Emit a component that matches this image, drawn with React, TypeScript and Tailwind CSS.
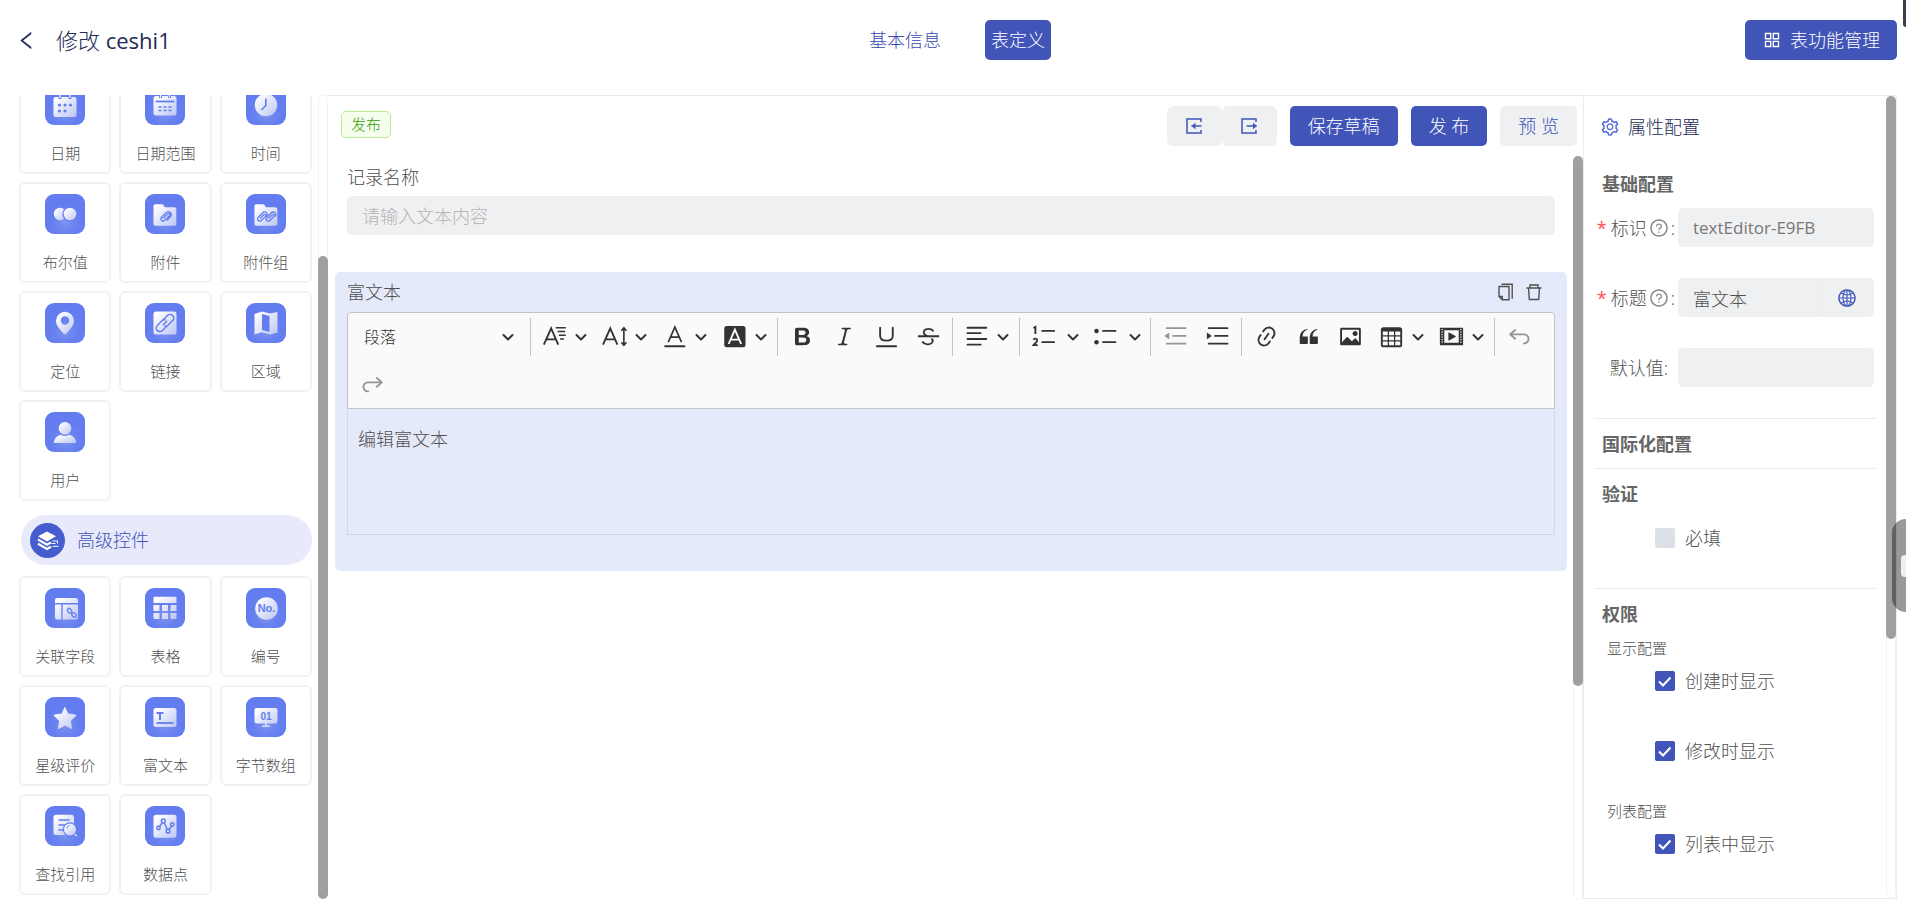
import type { ReactNode } from "react";
import clsx from "clsx";
import { AiOutlineAppstore, AiOutlineGlobal, AiOutlineLeft, AiOutlineQuestionCircle, AiOutlineSetting } from "react-icons/ai";

const BLUE = "#637df0";

// glyphs are drawn in a 40x40 box, filled with the shared "shade" gradient
const glyphs: Record<string, ReactNode> = {
    date: (
        <>
            <rect x="8.5" y="12" width="23" height="20" rx="2" />
            <path d="M15 10v4M25 10v4" stroke={BLUE} strokeWidth="3" />
            <path d="M15 10v3M25 10v3" stroke="#fff" strokeWidth="1.2" />
            <g fill={BLUE}>
                <circle cx="14.5" cy="20" r="1.6" />
                <circle cx="20" cy="20" r="1.6" />
                <circle cx="25.5" cy="20" r="1.6" />
                <circle cx="14.5" cy="26" r="1.6" />
                <circle cx="20" cy="26" r="1.6" />
            </g>
        </>
    ),
    range: (
        <>
            <rect x="8.5" y="11" width="23" height="19.5" rx="2.5" />
            <path d="M15.5 9v4M24.5 9v4" stroke={BLUE} strokeWidth="3" />
            <path d="M15.5 9.5v3M24.5 9.5v3" stroke="#fff" strokeWidth="1.2" />
            <path d="M10.5 16.5h19" stroke={BLUE} strokeWidth="1.8" />
            <path d="M13.5 22h3M18.5 22h3M23.5 22h3M13.5 25.5h3M18.5 25.5h3M23.5 25.5h3" stroke={BLUE} strokeWidth="1.3" />
        </>
    ),
    time: (
        <>
            <circle cx="20" cy="20" r="11.2" />
            <path d="M19.8 13.5v7l-4.3 4.5" fill="none" stroke={BLUE} strokeWidth="1.6" />
        </>
    ),
    bool: (
        <>
            <circle cx="15" cy="20" r="6.2" />
            <circle cx="25" cy="20" r="7.6" fill={BLUE} />
            <circle cx="25" cy="20" r="6.3" />
        </>
    ),
    file: (
        <>
            <path d="M8.5 12a1.8 1.8 0 0 1 1.8-1.8h6.5a2 2 0 0 1 1.6.8l1.6 2.2h9.5a1.8 1.8 0 0 1 1.8 1.8v15a1.8 1.8 0 0 1-1.8 1.8H10.3A1.8 1.8 0 0 1 8.5 30z" />
            <path d="m18 24.500 4.500-4.500a1.300 1.300 0 0 1 2 1.700l-5 4.800a2.200 2.200 0 0 1-3.200-3l5-5a3 3 0 0 1 4.700 3.500l-4 4.500" fill="none" stroke={BLUE} strokeWidth="1.3" />
        </>
    ),
    files: (
        <>
            <path d="M8.5 12a1.8 1.8 0 0 1 1.8-1.8h6.5a2 2 0 0 1 1.6.8l1.6 2.2h9.5a1.8 1.8 0 0 1 1.8 1.8v15a1.8 1.8 0 0 1-1.8 1.8H10.3A1.8 1.8 0 0 1 8.5 30z" />
            <g fill="none" stroke={BLUE} strokeWidth="1.3">
                <path d="m14 24.500 4-4a1.300 1.300 0 0 1 1.800 1.700l-4.500 4.300a2.200 2.200 0 0 1-3.200-3l4.500-4.500a2.600 2.600 0 0 1 4 3.500" />
                <path d="m22.500 24.500 4-4a1.300 1.300 0 0 1 1.800 1.700l-4.500 4.300a2.200 2.200 0 0 1-3.200-3l4.500-4.500a2.600 2.600 0 0 1 4 3.500" />
            </g>
        </>
    ),
    pin: <path fillRule="evenodd" d="M20 8.8a9 9 0 0 1 9 9c0 5-4 8.500-7.200 12.500a2.300 2.300 0 0 1-3.600 0C15 26.300 11 22.800 11 17.800a9 9 0 0 1 9-9zm0 4.500a4.200 4.200 0 1 0 0 8.400 4.200 4.200 0 0 0 0-8.400z" />,
    link: (
        <>
            <rect x="8.5" y="8.5" width="23" height="23" rx="2.5" />
            <g fill="none" stroke={BLUE} strokeWidth="1.5" strokeLinecap="round">
                <path d="m18.500 16.500 4-4a3.600 3.600 0 0 1 5.200 5L23 22.300a3.400 3.400 0 0 1-3 .9" />
                <path d="m21.500 23.500-4 4a3.600 3.600 0 0 1-5.200-5l4.700-4.800a3.400 3.400 0 0 1 3-.9" />
                <path d="m18.300 21.800 3.400-3.600" />
            </g>
        </>
    ),
    map: (
        <>
            <path d="m8.5 11 7.500-2.500 8 2 7.500-1.500v20.500L24 31.500l-8-2.300-7.500 2.300z" />
            <path d="m16 11 7.500 2v16L16 27z" fill={BLUE} />
        </>
    ),
    user: (
        <>
            <circle cx="20" cy="16.2" r="6.3" />
            <path d="M8.8 31c.5-4.500 3-7 6.700-8.200 1.500.9 3 1.300 4.500 1.300s3-.4 4.500-1.300c3.700 1.200 6.200 3.700 6.700 8.200z" />
        </>
    ),
    relate: (
        <>
            <path d="M12 10h19a2 2 0 0 1 2 2v3H10v-3a2 2 0 0 1 2-2zM10 16.500h6.200v15H12a2 2 0 0 1-2-2zM17.700 16.500H33v13a2 2 0 0 1-2 2H17.700z" />
            <g fill="none" stroke={BLUE} strokeWidth="1.3">
                <rect x="22.2" y="20.8" width="5" height="3.6" rx="1.8" transform="rotate(45 24.5 22.5)" />
                <rect x="26.5" y="25.2" width="5" height="3.6" rx="1.8" transform="rotate(45 29 27)" />
            </g>
        </>
    ),
    table: <path d="M9.500 8.800h21a1 1 0 0 1 1 1V15h-23V9.800a1 1 0 0 1 1-1zM8.500 17h6v6h-6zm8.500 0h6v6h-6zm8.500 0h6v6h-6zm-17 8h6v6h-5a1 1 0 0 1-1-1zm8.500 0h6v6h-6zm8.500 0h6v5a1 1 0 0 1-1 1h-5z" />,
    number: (
        <>
            <circle cx="20.5" cy="20.5" r="11.3" />
            <text x="20.5" y="24.2" fill={BLUE} fontSize="11" fontWeight="700" textAnchor="middle" fontFamily="Liberation Sans, sans-serif">No.</text>
        </>
    ),
    star: <path d="m20 10 3.300 6.600 7.200 1c.7.100 1 .9.500 1.400l-5.200 5.100 1.200 6.800c.1.700-.6 1.200-1.200.9L20 28.500l-5.800 3.300c-.6.300-1.300-.2-1.200-.9l1.200-6.800L9 19c-.5-.5-.2-1.300.5-1.400l7.200-1L19.300 10.500a.8.8 0 0 1 1.400 0z" />,
    rich: (
        <>
            <rect x="8.5" y="11" width="23" height="19" rx="2.5" />
            <path d="M11.5 16h7M15 16v7" stroke={BLUE} strokeWidth="2" />
            <path d="M11.5 26h17" stroke={BLUE} strokeWidth="1.8" />
        </>
    ),
    bytes: (
        <>
            <path d="M10.500 11h19a2 2 0 0 1 2 2v11.500a2 2 0 0 1-2 2H21v2h3v1.500h-8v-1.500h3v-2h-8.500a2 2 0 0 1-2-2V13a2 2 0 0 1 2-2z" />
            <text x="20" y="22.5" fill={BLUE} fontSize="10" fontWeight="700" textAnchor="middle" fontFamily="Liberation Sans, sans-serif">01</text>
        </>
    ),
    search: (
        <>
            <path d="M11 8.800h15.500a2.500 2.500 0 0 1 2.500 2.500v15.200a2.500 2.500 0 0 1-2.500 2.500H11a2.500 2.500 0 0 1-2.500-2.500V11.300A2.500 2.500 0 0 1 11 8.800z" />
            <path d="M13.5 14h11M13.5 19h7M13.5 24h5" stroke={BLUE} strokeWidth="1.7" />
            <circle cx="25" cy="23.5" r="7.2" fill={BLUE} />
            <circle cx="25" cy="23.5" r="6" />
            <path d="m29.500 28 2.500 2.200" stroke="#d5dbfb" strokeWidth="1.3" />
            <path d="M21.500 22.500a4 4 0 0 1 3-3" fill="none" stroke={BLUE} strokeWidth="1" />
        </>
    ),
    point: (
        <>
            <rect x="8.5" y="8.8" width="23" height="23" rx="2.5" />
            <g fill="none" stroke={BLUE} strokeWidth="1.5">
                <path d="m14.500 20.500 3-4M19.300 17l3 6.500M24 23.500l2.800-3.500" />
                <circle cx="13.5" cy="22" r="1.7" />
                <circle cx="18.3" cy="15" r="1.9" />
                <circle cx="23" cy="25.2" r="1.9" />
                <circle cx="27.3" cy="18.5" r="1.7" />
            </g>
        </>
    ),
};

const basicItems = [
    ["date", "日期"],
    ["range", "日期范围"],
    ["time", "时间"],
    ["bool", "布尔值"],
    ["file", "附件"],
    ["files", "附件组"],
    ["pin", "定位"],
    ["link", "链接"],
    ["map", "区域"],
    ["user", "用户"],
];

const advancedItems = [
    ["relate", "关联字段"],
    ["table", "表格"],
    ["number", "编号"],
    ["star", "星级评价"],
    ["rich", "富文本"],
    ["bytes", "字节数组"],
    ["search", "查找引用"],
    ["point", "数据点"],
];

function WidgetGrid({ items }: { items: string[][] }) {
    return (
        <div className="grid grid-cols-3 gap-2">
            {items.map(([icon, label]) => (
                <button key={icon} className="flex flex-col items-center h-[101px] pt-[10px] border-2 border-[#f2f2f2] rounded-md">
                    <svg viewBox="0 0 40 40" className="size-10" fill="url(#shade)">
                        <rect width="40" height="40" rx="9" fill={BLUE} />
                        <rect width="40" height="40" rx="9" fill="url(#glow)" />
                        {glyphs[icon]}
                    </svg>
                    <span className="mt-4 text-[15px] leading-6">{label}</span>
                </button>
            ))}
        </div>
    );
}

function Scrollbar({ thumb, children }: { thumb: string; children?: ReactNode }) {
    return (
        <div className="flex flex-col w-[10px] shrink-0 rounded-full ring-1 ring-inset ring-[#f2f2f2]">
            {children}
            <div className={clsx("w-full rounded-full bg-[#a0a0a0]", thumb)} />
        </div>
    );
}

function Sidebar() {
    return (
        <aside className="flex w-[328px] shrink-0">
            <div className="flex flex-col justify-end flex-1 min-h-0 pl-[19px] pr-[6px] pb-1 overflow-hidden">
                <WidgetGrid items={basicItems} />
                <div className="flex items-center gap-3 h-[50px] mt-[14px] mb-[11px] ml-[2px] px-[9px] rounded-full bg-[#e8eafc] shrink-0">
                    <svg viewBox="0 0 35 35" className="size-[35px]">
                        <circle cx="17.5" cy="17.5" r="17.5" fill="#465dd0" />
                        <path d="m17 8.500 9 4.700-9 5.300-9-5.300z" fill="#fff" />
                        <path d="m8 16.500 9 5.200 4-2.300M8 20.800l9 5.200 4-2.300" fill="none" stroke="#fff" strokeWidth="2.2" />
                        <path d="M22.500 18h5.500M21.500 20.500h4M22.500 23.300h6M27.500 18.200v2.300" fill="none" stroke="#fff" strokeWidth="1" />
                    </svg>
                    <h2 className="text-lg text-[#4154b8]">高级控件</h2>
                </div>
                <WidgetGrid items={advancedItems} />
            </div>
            <Scrollbar thumb="flex-1">
                <div className="h-1/5" />
            </Scrollbar>
        </aside>
    );
}

function Icon({ children }: { children: ReactNode }) {
    return (
        <svg viewBox="0 0 20 20" className="size-[25px]" fill="currentColor">
            {children}
        </svg>
    );
}

function Chevron() {
    return (
        <svg viewBox="0 0 12 12" className="size-3" fill="none" stroke="#333" strokeWidth="2" strokeLinecap="round" strokeLinejoin="round">
            <path d="m1.500 4 4.500 4.500L10.500 4" />
        </svg>
    );
}

function Tool({ label, children, muted }: { label: string; children: ReactNode; muted?: boolean }) {
    return (
        <button aria-label={label} className={clsx("flex items-center justify-center w-[42px] h-[47px]", muted && "opacity-50")}>
            <Icon>{children}</Icon>
        </button>
    );
}

function DropTool({ label, children, split }: { label: string; children: ReactNode; split?: boolean }) {
    return (
        <button aria-label={label} className={clsx("flex items-center h-[47px] pl-2", split ? "w-[62px] gap-[11px]" : "w-[60px] gap-2")}>
            <Icon>{children}</Icon>
            <Chevron />
        </button>
    );
}

function Separator() {
    return <span className="w-px h-[38px] mx-[3px] my-[5px] bg-[#c4c4c4]" />;
}

const lines = { fill: "none", stroke: "currentColor", strokeWidth: 1.5, strokeLinecap: "round" } as const;

function Toolbar() {
    return (
        <div className="flex flex-wrap px-[3px] text-[#333] border border-[#c4c4c4] bg-[#fafafa] rounded-t-sm">
            <div className="grid items-center w-[176px] h-[47px]">
                <select aria-label="标题" className="w-full col-start-1 row-start-1 pl-[13px] text-base appearance-none">
                    <option>段落</option>
                </select>
                <span className="col-start-1 row-start-1 mr-[13px] pointer-events-none justify-self-end">
                    <Chevron />
                </span>
            </div>
            <Separator />
            <DropTool label="字体">
                <path d="M1.5 16.500 7.300 3.500 13 16.500M3.500 12.300h7.600" {...lines} strokeLinecap="butt" />
                <path d="M11 3h8M12.500 6h6M13.500 9h5.500M14.500 12h3" {...lines} strokeLinecap="butt" strokeWidth="1.3" />
            </DropTool>
            <DropTool label="字号">
                <path d="M.8 16.500 6.600 3.500 12.300 16.500M2.800 12.300h7.600" {...lines} strokeLinecap="butt" />
                <path d="M17.500 3v14M15.800 5l1.700-2 1.700 2M15.800 15l1.700 2 1.700-2" {...lines} strokeWidth="1.3" />
            </DropTool>
            <DropTool label="字体颜色">
                <path d="M5 14.500 10.300 2.500 15.600 14.500M7 10.500h6.600" {...lines} strokeLinecap="butt" strokeWidth="1.3" />
                <path d="M2.500 17.800h15.500" {...lines} />
            </DropTool>
            <DropTool label="背景颜色">
                <rect x="1.8" y="1.5" width="17" height="17" rx="2" />
                <path d="M5.300 16 10.300 4.500 15.300 16M7 12.500h6.500" {...lines} stroke="#fff" strokeLinecap="butt" />
            </DropTool>
            <Separator />
            <Tool label="加粗">
                <path d="M10.187 17H5.773c-.637 0-1.092-.138-1.364-.415-.273-.277-.409-.718-.409-1.323V4.738c0-.617.14-1.062.419-1.332.279-.27.73-.406 1.354-.406h4.68c.69 0 1.288.041 1.793.124.506.083.96.242 1.36.478.341.197.644.447.906.75a3.262 3.262 0 0 1 .808 2.162c0 1.401-.722 2.426-2.167 3.075C15.05 10.175 16 11.315 16 13.01a3.756 3.756 0 0 1-2.296 3.504 6.1 6.1 0 0 1-1.517.377c-.571.073-1.238.11-2 .11zm-.217-6.217H7v4.087h3.069c1.977 0 2.965-.69 2.965-2.072 0-.707-.256-1.22-.768-1.537-.512-.319-1.277-.478-2.296-.478zM7 5.13v3.619h2.606c.729 0 1.292-.067 1.69-.2a1.6 1.6 0 0 0 .91-.765c.165-.267.247-.566.247-.897 0-.707-.26-1.176-.778-1.409-.519-.232-1.31-.348-2.375-.348H7z" />
            </Tool>
            <Tool label="倾斜">
                <path d="m9.586 14.633.021.004c-.036.335.095.655.393.962.082.083.173.15.274.201h1.474a.6.6 0 1 1 0 1.2H5.304a.6.6 0 0 1 0-1.2h1.15c.474-.07.809-.182 1.005-.334.157-.122.291-.32.404-.597l2.416-9.55a1.053 1.053 0 0 0-.281-.823 1.12 1.12 0 0 0-.442-.296H8.15a.6.6 0 0 1 0-1.2h6.443a.6.6 0 1 1 0 1.2h-1.195c-.376.056-.65.155-.823.296-.215.175-.423.439-.623.79l-2.366 9.347z" />
            </Tool>
            <Tool label="下划线">
                <path d="M4.900 3v6.300c0 2.600 2 4 5 4s5.100-1.400 5.100-4V3M2.300 17.800h15.400" {...lines} />
            </Tool>
            <Tool label="删除线">
                <path d="M7 16.4c-.8-.4-1.500-.9-2.200-1.500a.6.6 0 0 1-.2-.5l.3-.6h1c1 1.200 2.100 1.700 3.700 1.700 1 0 1.800-.3 2.300-.6.6-.4.6-1.200.6-1.300.2-1.200-.9-2.100-.9-2.100h2.100c.3.7.4 1.200.4 1.700v.8l-.6 1.200c-.6.8-1.100 1-1.600 1.200a6 6 0 0 1-2.400.6c-1 0-1.800-.3-2.500-.6zM6.800 9 6 8.300c-.4-.5-.5-.8-.5-1.600 0-.7.1-1.300.5-1.800.4-.6 1-1 1.600-1.300a6.300 6.300 0 0 1 4.700 0 4 4 0 0 1 1.700 1l.3.7c0 .1.2.4-.2.7-.4.2-.9.1-1 0a3 3 0 0 0-1.200-1c-.4-.2-1-.3-2-.4-.7 0-1.400.2-2 .6-.8.6-1 .8-1 1.500 0 .8.5 1 1.200 1.500.6.4 1.100.7 1.900 1zM1.500 10.500V9h17v1.500z" />
            </Tool>
            <Separator />
            <DropTool label="对齐">
                <path d="M2.800 3h15M2.800 7.300h10.500M2.800 12h15M2.800 16.500h10.500" {...lines} />
            </DropTool>
            <Separator />
            <DropTool label="编号列表" split>
                <path d="M9 5.500h9.500M9 14.500h9.500" {...lines} />
                <path d="M2 3.200l1.500-.9V8M2 12.700c.3-1.300 3-1.300 3 .2 0 1.200-1.600 2.300-3 4h3.400" {...lines} strokeLinecap="butt" strokeWidth="1.5" />
            </DropTool>
            <DropTool label="项目列表" split>
                <path d="M8 5.500h10M8 14.500h10" {...lines} />
                <circle cx="2.8" cy="5.5" r="1.8" />
                <circle cx="2.8" cy="14.5" r="1.8" />
            </DropTool>
            <Separator />
            <Tool label="减少缩进" muted>
                <path d="M3 3.300h15M8 9.500h10M3 15.700h15" {...lines} />
                <path d="M5 6.800v5.400L1 9.500z" />
            </Tool>
            <Tool label="增加缩进">
                <path d="M3 3.300h15M8 9.500h10M3 15.700h15" {...lines} />
                <path d="M1.500 6.800v5.400L5.500 9.500z" />
            </Tool>
            <Separator />
            <Tool label="超链接">
                <path d="m11.077 15 .991-1.416a.75.75 0 1 1 1.229.86l-1.148 1.64a.748.748 0 0 1-.217.206 5.251 5.251 0 0 1-8.503-5.955.741.741 0 0 1 .12-.274l1.147-1.639a.75.75 0 1 1 1.228.86L4.933 10.7l.006.003a3.75 3.75 0 0 0 6.132 4.294l.006.004zm5.494-5.335a.748.748 0 0 1-.12.274l-1.147 1.639a.75.75 0 1 1-1.228-.86l.86-1.23a3.75 3.75 0 0 0-6.144-4.301l-.86 1.229a.75.75 0 0 1-1.229-.86l1.148-1.64a.748.748 0 0 1 .217-.206 5.251 5.251 0 0 1 8.503 5.955zm-4.563-2.532a.75.75 0 0 1 .184 1.045l-3.155 4.505a.75.75 0 1 1-1.229-.86l3.155-4.506a.75.75 0 0 1 1.045-.184z" />
            </Tool>
            <Tool label="引用">
                <path d="M3 10.423a6.5 6.5 0 0 1 6.056-6.408l.038.67C6.448 5.423 5.354 7.663 5.22 10H9c.552 0 .5.432.5.986v4.511c0 .554-.448.503-1 .503h-5c-.552 0-.5-.449-.5-1.003v-4.574zm8 0a6.5 6.5 0 0 1 6.056-6.408l.038.67c-2.646.739-3.74 2.979-3.873 5.315H17c.552 0 .5.432.5.986v4.511c0 .554-.448.503-1 .503h-5c-.552 0-.5-.449-.5-1.003v-4.574z" />
            </Tool>
            <Tool label="图像">
                <path d="M6.91 10.54c.26-.23.64-.21.88.03l3.36 3.14 2.23-2.06a.64.64 0 0 1 .87 0l2.52 2.97V4.5H3.2v10.12l3.71-4.08zm10.27-7.51c.6 0 1.09.47 1.09 1.05v11.84c0 .59-.49 1.06-1.09 1.06H2.79c-.6 0-1.09-.47-1.09-1.06V4.08c0-.58.49-1.05 1.1-1.05h14.38zm-5.22 5.56a1.96 1.96 0 1 1 3.4-1.96 1.96 1.96 0 0 1-3.4 1.96z" />
            </Tool>
            <DropTool label="表格">
                <path d="M3 6v3h4V6H3zm0 4v3h4v-3H3zm0 4v3h4v-3H3zm5 3h4v-3H8v3zm5 0h4v-3h-4v3zm4-4v-3h-4v3h4zm0-4V6h-4v3h4zm1.500 8a1.5 1.5 0 0 1-1.500 1.500H3A1.5 1.5 0 0 1 1.500 17V4c.222-.863 1.068-1.5 2-1.500h13c.932 0 1.778.637 2 1.500v13zM12 13v-3H8v3h4zm0-4V6H8v3h4z" />
            </DropTool>
            <DropTool label="媒体">
                <path d="M18.68 3.03c.6 0 .59-.03.59.55v12.84c0 .59.01.56-.59.56H1.29c-.6 0-.59.03-.59-.56V3.58c0-.58-.01-.55.6-.55h17.38zM15.77 15V5H4.2v10h11.57zM2 4v1h1V4H2zm0 2v1h1V6H2zm0 2v1h1V8H2zm0 2v1h1v-1H2zm0 2v1h1v-1H2zm0 2v1h1v-1H2zM17 4v1h1V4h-1zm0 2v1h1V6h-1zm0 2v1h1V8h-1zm0 2v1h1v-1h-1zm0 2v1h1v-1h-1zm0 2v1h1v-1h-1zM7.5 7.177a.4.4 0 0 1 .593-.351l5.133 2.824a.4.4 0 0 1 0 .7l-5.133 2.824a.4.4 0 0 1-.593-.35V7.176z" fillRule="evenodd" />
            </DropTool>
            <Separator />
            <Tool label="撤销" muted>
                <path d="M6.500 4.800 2.500 8.300l4 3.500M2.800 8.300h11a3.500 3.500 0 1 1-.3 7.200" {...lines} strokeLinejoin="round" />
            </Tool>
            <Tool label="重做" muted>
                <path d="m13.500 4.800 4 3.500-4 3.500M17.200 8.300h-11a3.500 3.500 0 1 0 .3 7.200" {...lines} strokeLinejoin="round" />
            </Tool>
        </div>
    );
}

function TransferIcon({ arrow }: { arrow: string }) {
    return (
        <svg viewBox="0 0 18 18" className="size-[18px]" fill="none" stroke="currentColor" strokeWidth="1.5">
            <path d="M16 5V2H2v14h14v-3" />
            <path d="M6.500 9h10" />
            <path d={arrow} fill="currentColor" stroke="none" />
        </svg>
    );
}

function Designer() {
    return (
        <main className="flex flex-col flex-1 min-w-0 border-t border-[#e8e8e8]">
            <div className="flex items-start justify-between pt-[10px] pl-[13px] pr-[6px]">
                <span className="px-[9px] mt-[5px] text-[15px] leading-[25px] text-[#389e0d] border border-[#b7eb8f] bg-[#f6ffed] rounded-[5px]">发布</span>
                <div className="flex gap-[13px] text-lg">
                    <div className="flex text-[#4154b8]">
                        <button aria-label="导入" className="flex items-center justify-center w-[55px] h-10 rounded-md bg-[#eff0f2]">
                            <TransferIcon arrow="M6.500 9 10.500 5.800v6.400z" />
                        </button>
                        <button aria-label="导出" className="flex items-center justify-center w-[55px] h-10 rounded-md bg-[#eff0f2]">
                            <TransferIcon arrow="M17 9 13 5.800v6.400z" />
                        </button>
                    </div>
                    <button className="h-10 px-[18px] text-white rounded-[5px] bg-[#4154b8]">保存草稿</button>
                    <button className="h-10 px-[18px] text-white rounded-[5px] bg-[#4154b8]">发 布</button>
                    <button className="h-10 px-[18px] text-[#4154b8] rounded-[5px] bg-[#eff0f2]">预 览</button>
                </div>
            </div>
            <div className="flex flex-1 min-h-0 mt-[10px]">
                <div className="flex-1 min-w-0 pl-[7px] pr-[6px]">
                    <div className="px-3 pt-[7px]">
                        <label htmlFor="record" className="block text-lg leading-7">记录名称</label>
                        <input id="record" placeholder="请输入文本内容" className="block w-full h-[39px] mt-[5px] px-[15px] text-lg rounded-[5px] bg-[#eff0f2] placeholder:text-[#b5b5b5]" />
                    </div>
                    <section className="px-3 pt-[6px] pb-9 mt-[37px] rounded-[5px] bg-[#e5eafb]">
                        <div className="flex items-center justify-between h-7 mb-[6px]">
                            <h3 className="text-lg">富文本</h3>
                            <div className="flex gap-[10px] mr-3">
                                <button aria-label="复制">
                                    <svg viewBox="0 0 18 18" className="size-[18px]" fill="none" stroke="currentColor" strokeWidth="1.4">
                                        <path d="M4.500 1.200h10.700v14.500" />
                                        <path d="M2 3.500h10v13.300H5.300L2 13.500zM2 13.500h3.300v3.300" />
                                    </svg>
                                </button>
                                <button aria-label="删除">
                                    <svg viewBox="0 0 18 18" className="size-[18px]" fill="none" stroke="currentColor" strokeWidth="1.4">
                                        <path d="M1.500 5h15M5 4.800V2h8v2.800M3.500 5l.8 11.500h9.400L14.500 5" />
                                    </svg>
                                </button>
                            </div>
                        </div>
                        <Toolbar />
                        <div contentEditable suppressContentEditableWarning className="h-[126px] px-[10px] py-[16px] text-lg leading-7 border border-t-0 border-[#d3d6df]">
                            编辑富文本
                        </div>
                    </section>
                </div>
                <Scrollbar thumb="h-[530px]" />
            </div>
        </main>
    );
}

const fieldLabel = "flex items-center justify-end w-[84px] pr-[3px] text-lg shrink-0";
const fieldInput = "flex-1 min-w-0 h-[39px] px-[15px] bg-[#eff0f2]";

function Required() {
    return <span className="mr-[4px] font-normal text-[#ff4d4f]">*</span>;
}

function Check({ label, checked }: { label: string; checked?: boolean }) {
    return (
        <label className="flex items-center gap-[10px] h-[30px] ml-[61px] text-lg">
            <span className="grid">
                <input type="checkbox" defaultChecked={checked} className="peer appearance-none col-start-1 row-start-1 size-5 rounded-xs bg-[#dbe1e6] checked:bg-[#4154b8]" />
                <svg viewBox="0 0 20 20" className="col-start-1 row-start-1 invisible pointer-events-none size-5 peer-checked:visible" fill="none" stroke="#fff" strokeWidth="2">
                    <path d="m4 10.500 4 4 7.500-8" />
                </svg>
            </span>
            {label}
        </label>
    );
}

function GroupTitle({ children }: { children: ReactNode }) {
    return <h3 className="pl-2 text-lg font-bold leading-7 text-[#666]">{children}</h3>;
}

function Properties() {
    return (
        <aside className="flex w-[314px] shrink-0 border border-[#ebebeb]">
            <div className="flex-1 min-w-0 px-[10px]">
                <h2 className="flex items-center gap-[8px] pl-[6px] mt-[17px] text-lg leading-7 text-[#232a55]">
                    <AiOutlineSetting className="text-xl text-[#4d66d3]" />
                    属性配置
                </h2>
                <section className="pt-[29px] pb-[31px] border-b border-[#ebebeb]">
                    <GroupTitle>基础配置</GroupTitle>
                    <div className="flex flex-col gap-[31px] mt-[10px] pr-[2px]">
                        <div className="flex">
                            <label htmlFor="ident" className={fieldLabel}>
                                <Required />
                                标识
                                <AiOutlineQuestionCircle className="mx-[2px] text-xl text-[#888]" />:
                            </label>
                            <input id="ident" defaultValue="textEditor-E9FB" className={clsx(fieldInput, "text-[17px] font-normal text-[#777] rounded-[5px]")} />
                        </div>
                        <div className="flex">
                            <label htmlFor="caption" className={fieldLabel}>
                                <Required />
                                标题
                                <AiOutlineQuestionCircle className="mx-[2px] text-xl text-[#888]" />:
                            </label>
                            <input id="caption" defaultValue="富文本" className={clsx(fieldInput, "text-lg rounded-l-[5px]")} />
                            <button aria-label="多语言" className="flex items-center justify-center w-14 border-l border-[#e9eaec] rounded-r-[5px] bg-[#eff0f2] text-xl text-[#4154b8]">
                                <AiOutlineGlobal />
                            </button>
                        </div>
                        <div className="flex">
                            <label htmlFor="preset" className="flex items-center justify-end w-[84px] pr-[10px] text-lg shrink-0">默认值:</label>
                            <input id="preset" className={clsx(fieldInput, "text-lg rounded-[5px]")} />
                        </div>
                    </div>
                </section>
                <section className="pt-[11px] pb-[10px] border-b border-[#ebebeb]">
                    <GroupTitle>国际化配置</GroupTitle>
                </section>
                <section className="pt-[11px] pb-[35px] border-b border-[#ebebeb]">
                    <GroupTitle>验证</GroupTitle>
                    <div className="mt-[15px]">
                        <Check label="必填" />
                    </div>
                </section>
                <section className="pt-[11px]">
                    <GroupTitle>权限</GroupTitle>
                    <h4 className="pl-[13px] mt-[8px] mb-[6px] text-[15px] leading-6">显示配置</h4>
                    <div className="flex flex-col gap-10">
                        <Check label="创建时显示" checked />
                        <Check label="修改时显示" checked />
                    </div>
                    <h4 className="pl-[13px] mt-[33px] mb-[6px] text-[15px] leading-6">列表配置</h4>
                    <Check label="列表中显示" checked />
                </section>
            </div>
            <Scrollbar thumb="h-[543px]" />
        </aside>
    );
}

export default function App() {
    return (
        <div className="flex flex-col h-screen pb-[11px] overflow-hidden bg-white font-light text-[#505050] font-['Open_Sans','Noto_Sans_CJK_SC',sans-serif]">
            <svg className="absolute size-0" aria-hidden="true">
                <defs>
                    <linearGradient id="shade" x1="0" y1="0" x2="1" y2="1">
                        <stop offset="0.1" stopColor="#fff" />
                        <stop offset="1" stopColor="#bcc6f3" />
                    </linearGradient>
                    <radialGradient id="glow" cx="0.5" cy="0.7" r="0.5">
                        <stop offset="0" stopColor="#8196ef" />
                        <stop offset="1" stopColor="#637df0" stopOpacity="0" />
                    </radialGradient>
                </defs>
            </svg>
            <header className="grid items-center grid-cols-[1fr_auto_1fr] pt-5 pb-[35px] pl-[15px] pr-[9px] shrink-0">
                <div className="flex items-center gap-[18px] text-[22px] text-[#232a55]">
                    <button aria-label="返回">
                        <AiOutlineLeft className="size-[23px]" />
                    </button>
                    <h1>
                        修改 <span className="font-normal">ceshi1</span>
                    </h1>
                </div>
                <nav className="flex items-center gap-11 pl-2 text-lg">
                    <a href="#info" className="text-[#3548b0]">基本信息</a>
                    <a href="#define" className="h-10 px-[6px] leading-10 text-white rounded-[5px] bg-[#4154b8]">表定义</a>
                </nav>
                <button className="flex items-center gap-[8px] h-10 px-[17px] text-lg text-white rounded-[5px] bg-[#4154b8] justify-self-end">
                    <AiOutlineAppstore className="text-xl" />
                    表功能管理
                </button>
            </header>
            <div className="flex flex-1 min-h-0">
                <Sidebar />
                <Designer />
                <Properties />
                <div className="w-[9px] shrink-0" />
            </div>
            <div className="absolute right-0 top-0 w-[3px] h-[27px] rounded-bl-sm bg-[#3c3f4c]" />
            <button aria-label="展开" className="absolute right-0 top-[519px] flex items-center justify-end w-[14px] h-[93px] rounded-l-[14px] bg-black/40">
                <span className="w-[5px] h-[22px] rounded-l-sm bg-[#f0f0f0]" />
            </button>
        </div>
    );
}
